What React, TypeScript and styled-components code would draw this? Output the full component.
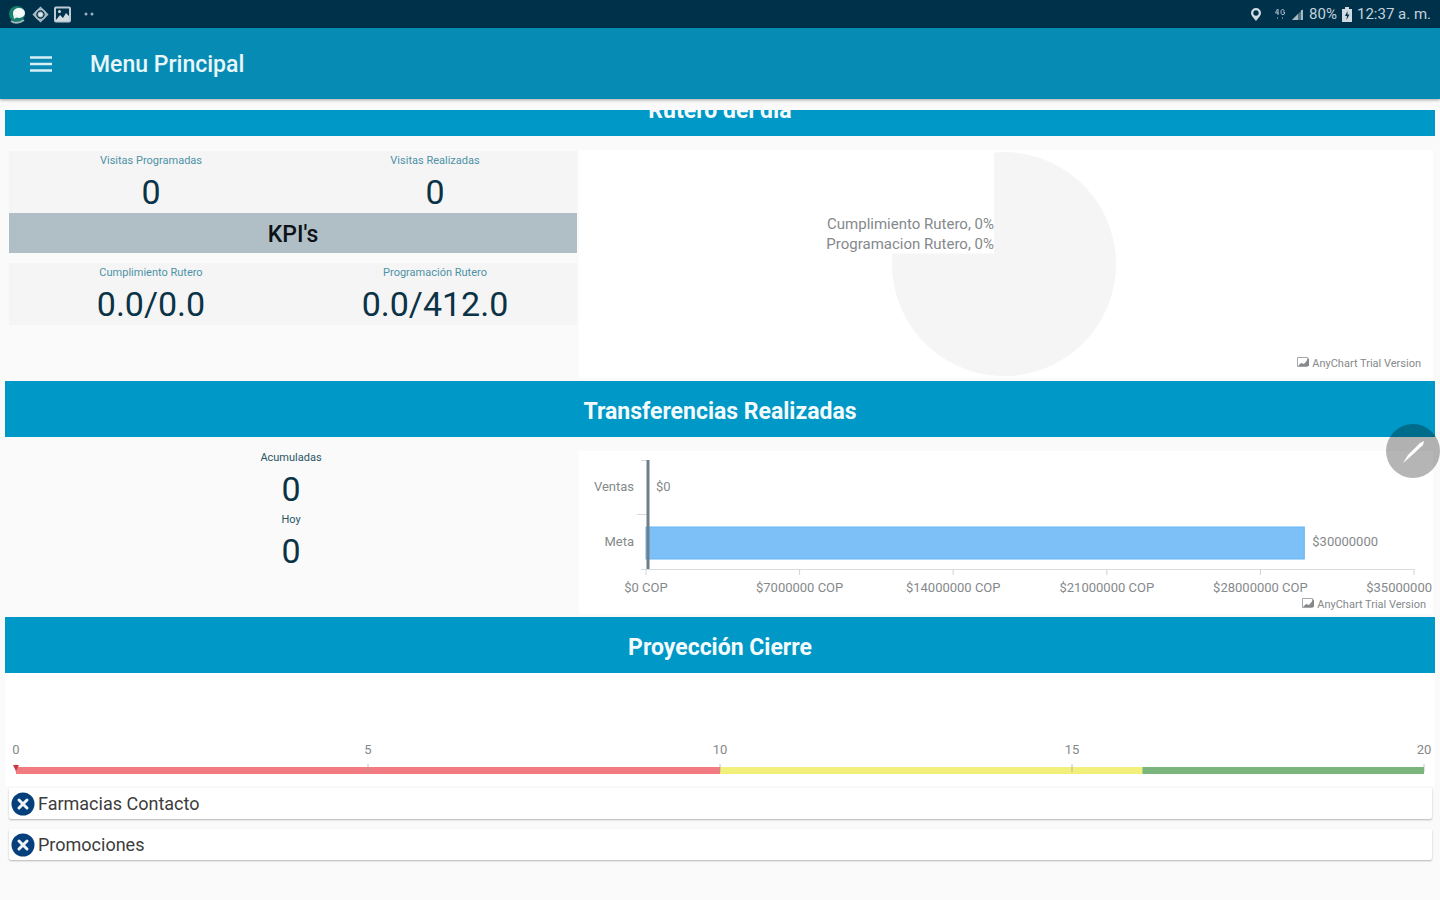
import React from "react";
import styled, { createGlobalStyle } from "styled-components";

const GlobalStyle = createGlobalStyle`
  * { box-sizing: border-box; }
  body {
    margin: 0;
    background: #fafafa;
    font-family: Roboto, "Liberation Sans", sans-serif;
    color: #0b3346;
  }
  h1, h2, h3, p, dl, dd, dt, ul { margin: 0; padding: 0; }
  button { font: inherit; color: inherit; border: 0; padding: 0; background: none; cursor: pointer; }
`;

const Page = styled.div`
  min-height: 100vh;
  overflow-x: hidden;
`;

const StatusBar = styled.div`
  display: flex;
  align-items: center;
  justify-content: space-between;
  height: 28px;
  padding: 0 9px 0 8px;
  background: #00314b;
  color: #c3d2da;
  font-size: 15px;
`;

const StatusGroup = styled.div`
  display: flex;
  align-items: center;
  gap: 5px;
`;

const Spacer = styled.span`
  width: 2px;
`;

const AppBar = styled.header`
  position: relative;
  display: flex;
  align-items: center;
  gap: 38px;
  height: 71px;
  padding: 0 30px;
  background: #068cb4;
  color: #e9f6fa;
  box-shadow: 0 1px 3px rgba(0, 0, 0, 0.35);
`;

const MenuButton = styled.button`
  display: flex;
`;

const AppTitle = styled.h1`
  font-size: 23px;
  font-weight: 500;
  line-height: 34px;
  padding-top: 2px;
`;

const Content = styled.main`
  padding: 11px 5px 40px;
`;

const ScrolledEdge = styled.div`
  display: flex;
  flex-direction: column;
  justify-content: flex-end;
  height: 26px;
  overflow: hidden;
`;

const SectionTitle = styled.h2`
  flex: none;
  height: 56px;
  background: #0098c6;
  color: #f4fbfd;
  font-size: 23px;
  font-weight: 700;
  line-height: 61px;
  text-align: center;
`;

const Split = styled.div<{ $height: number }>`
  display: grid;
  grid-template-columns: 2fr 3fr;
  min-height: ${(p) => p.$height}px;
`;

const StatsColumn = styled.div<{ $top: number; $left: number }>`
  padding: ${(p) => p.$top}px 0 0 ${(p) => p.$left}px;
`;

const StatPair = styled.dl`
  display: grid;
  grid-template-columns: 1fr 1fr;
  background: #f5f5f5;
`;

const StatStack = styled.dl`
  display: grid;
`;

const Stat = styled.div`
  text-align: center;
`;

const StatLabel = styled.dt<{ $dark?: boolean }>`
  font-size: 11px;
  line-height: 20px;
  color: ${(p) => (p.$dark ? "#2b5565" : "#4d92a6")};
`;

const StatValue = styled.dd`
  font-size: 34px;
  line-height: 42px;
`;

const KpiTitle = styled.h3`
  height: 40px;
  margin-bottom: 10px;
  background: #b0bec5;
  color: #0c1216;
  font-size: 23px;
  font-weight: 500;
  line-height: 44px;
  text-align: center;
`;

const ChartPanel = styled.div`
  margin: 14px 2px 3px;
  background: #fff;
  overflow: hidden;
`;

const ChartSvg = styled.svg`
  display: block;
  width: 100%;
  overflow: hidden;
`;

const ChartText = styled.text<{ $size: number }>`
  font-size: ${(p) => p.$size}px;
  fill: #85898b;
`;

const PlotArea = styled.div`
  padding: 0 19px 0 67px;
`;

const PlotSvg = styled.svg`
  display: block;
  width: 100%;
  overflow: visible;
`;

const GaugePanel = styled.div`
  padding: 66px 11px 9px;
  background: #fff;
`;

const LinkList = styled.ul`
  display: grid;
  gap: 10px;
  padding: 2px 3px 0 4px;
  list-style: none;
`;

const LinkCard = styled.button`
  display: flex;
  align-items: center;
  gap: 3px;
  width: 100%;
  height: 31px;
  padding-left: 2px;
  border-radius: 2px;
  background: #fff;
  color: #3c3c3c;
  font-size: 18px;
  text-align: left;
  box-shadow: 0 1px 2px rgba(0, 0, 0, 0.28);
`;

const PenButton = styled.button`
  position: fixed;
  top: 424px;
  right: 0;
  width: 54px;
  height: 54px;
  border-radius: 50%;
  background: rgba(0, 0, 0, 0.29);
`;

const ChatIcon = () => (
  <svg width="19" height="19" viewBox="0 0 19 19">
    <circle cx="9" cy="9" r="8" fill="#16816f" />
    <path d="M3 16q6 4 13-1" stroke="#9fb9bb" strokeWidth="2" fill="none" />
    <ellipse cx="11" cy="8" rx="6" ry="5" fill="#f6fbfa" />
    <path d="M5 9l1 5 5-3z" fill="#e8f4f1" />
  </svg>
);

const TargetIcon = () => (
  <svg width="17" height="17" viewBox="0 0 17 17" fill="none" stroke="#aebfc8">
    <path d="M8.500 1.500l7 7-7 7-7-7z" strokeWidth="1.500" />
    <circle cx="8.500" cy="8.500" r="5" strokeWidth="1.500" />
    <circle cx="8.500" cy="8.500" r="2.500" fill="#dbe6ea" />
  </svg>
);

const PictureIcon = () => (
  <svg width="17" height="17" viewBox="0 0 17 17">
    <rect x="1" y="1.500" width="15" height="14" rx="1" fill="none" stroke="#bccbd3" strokeWidth="2" />
    <path d="M2 14l4-5 3 3 3-5 3 3v5H2z" fill="#cfdbe1" />
    <circle cx="5.500" cy="5.500" r="1.500" fill="#cfdbe1" />
  </svg>
);

const DotsIcon = () => (
  <svg width="14" height="6" viewBox="0 0 14 6" fill="#9db2bd">
    <circle cx="3" cy="3" r="1.500" />
    <circle cx="9" cy="3" r="1.500" />
  </svg>
);

const PinIcon = () => (
  <svg width="12" height="15" viewBox="0 0 12 15">
    <path d="M6 1a5 5 0 0 1 5 5c0 3-3 5-5 8-2-3-5-5-5-8a5 5 0 0 1 5-5z" fill="#d0dce2" />
    <circle cx="6" cy="6" r="2.700" fill="#00314b" />
  </svg>
);

const NetworkIcon = () => (
  <svg width="12" height="15" viewBox="0 0 12 15" fill="none" stroke="#a9bcc6">
    <path d="M3.500 2L1.500 6h3.500M4 2v6M10.500 3.500Q7 1 7 5t3.500 2V5H9" />
    <path d="M3.500 10v2M8.500 10v2" opacity=".5" />
  </svg>
);

const SignalIcon = () => (
  <svg width="13" height="13" viewBox="0 0 13 13">
    <path d="M12 1v11H1z" fill="#4f7283" />
    <path d="M7 6v6H1z" fill="#a9bcc6" />
    <path d="M11 2v10" stroke="#c3d2da" strokeWidth="1.500" />
  </svg>
);

const BatteryIcon = () => (
  <svg width="10" height="15" viewBox="0 0 10 15">
    <path d="M3 0h4v2h3v13H0V2h3z" fill="#cfdbe1" />
    <path d="M5.500 4L3 9h2l-.5 4L7.500 7.500h-2z" fill="#00314b" />
  </svg>
);

const CloseBadge = () => (
  <svg width="24" height="24" viewBox="0 0 24 24">
    <circle cx="12" cy="12" r="11.500" fill="#05407c" />
    <path d="M8 8l8 8M16 8l-8 8" stroke="#eef4fa" strokeWidth="3" strokeLinecap="round" />
  </svg>
);

const Credit = ({ y, inset }: { y: number; inset: number }) => (
  <svg x="100%" y={y} overflow="visible">
    <g transform={`translate(${-inset} 0)`}>
      <path d="M-123.500-9.500h10v9h-10z" fill="none" stroke="#a5a8aa" />
      <path d="M-123-1l3-3 3 1 5-6v8z" fill="#85898b" />
      <ChartText $size={11} textAnchor="end">
        AnyChart Trial Version
      </ChartText>
    </g>
  </svg>
);

const PieChart = () => (
  <ChartSvg height="227" role="img" aria-label="Rutero">
    <svg x="50%" overflow="visible">
      <path d="M-12 2.500A112 112 0 1 1 -113.500 103.500H-12z" fill="#f5f5f5" />
      <ChartText $size={15} x="-12" y="79" textAnchor="end">
        Cumplimiento Rutero, 0%
      </ChartText>
      <ChartText $size={15} x="-12" y="99" textAnchor="end">
        Programacion Rutero, 0%
      </ChartText>
    </svg>
    <Credit y={217} inset={12} />
  </ChartSvg>
);

const MAX = 35000000;
const GOAL = 30000000;
const TICKS = [0, 7000000, 14000000, 21000000, 28000000];
const share = (value: number) => `${(value / MAX) * 100}%`;

const BarChart = () => (
  <PlotArea>
    <PlotSvg height="163" role="img" aria-label="Ventas y meta">
      <rect x="0" y="76" width={share(GOAL)} height="32" fill="#7cc0f7" stroke="#64b5f6" />
      <path d="M-5 9.500H2M-9 63.500H2M-5 118.500H2" stroke="#d5dadd" />
      <line x1="0" x2="100%" y1="118.500" y2="118.500" stroke="#d9dcde" />
      <line x1="2" x2="2" y1="9" y2="118" stroke="#6d7f89" strokeWidth="3" />
      <ChartText $size={13} x="-12" y="40" textAnchor="end">Ventas</ChartText>
      <ChartText $size={13} x="-12" y="95" textAnchor="end">Meta</ChartText>
      <ChartText $size={13} x="10" y="40">$0</ChartText>
      <svg x={share(GOAL)} overflow="visible">
        <ChartText $size={13} x="8" y="95">$30000000</ChartText>
      </svg>
      {TICKS.map((t) => (
        <svg key={t} x={share(t)} overflow="visible">
          <path d="M0 118v6" stroke="#cfd3d5" />
          <ChartText $size={13} y="141" textAnchor="middle">{`$${t} COP`}</ChartText>
        </svg>
      ))}
      <svg x="100%" overflow="visible">
        <path d="M0 118v6" stroke="#cfd3d5" />
        <ChartText $size={13} x="18" y="141" textAnchor="end">{`$${MAX}`}</ChartText>
      </svg>
      <Credit y={157} inset={-12} />
    </PlotSvg>
  </PlotArea>
);

const RANGES = [
  { from: 0, to: 10, color: "#f17b80" },
  { from: 10, to: 16, color: "#f2f07a" },
  { from: 16, to: 20, color: "#7ab67c" },
];

const LinearGauge = () => (
  <PlotSvg height="38" role="img" aria-label="Proyección Cierre">
    {RANGES.map((r) => (
      <rect key={r.from} x={`${r.from * 5}%`} y="28" width={`${(r.to - r.from) * 5}%`} height="7" fill={r.color} />
    ))}
    {[0, 5, 10, 15, 20].map((v) => (
      <svg key={v} x={`${v * 5}%`} overflow="visible">
        <path d="M0 25v8" stroke="#8aa0a8" opacity=".6" />
        <ChartText $size={13} y="15" textAnchor="middle">{v}</ChartText>
      </svg>
    ))}
    <path d="M-3 26h6l-3 6z" fill="#c9363c" />
  </PlotSvg>
);

const StatItem = ({ label, value, dark }: { label: string; value: string; dark?: boolean }) => (
  <Stat>
    <StatLabel $dark={dark}>{label}</StatLabel>
    <StatValue>{value}</StatValue>
  </Stat>
);

export default function App() {
  return (
    <Page>
      <GlobalStyle />
      <StatusBar>
        <StatusGroup>
          <ChatIcon />
          <TargetIcon />
          <PictureIcon />
          <Spacer />
          <DotsIcon />
        </StatusGroup>
        <StatusGroup>
          <PinIcon />
          <Spacer />
          <NetworkIcon />
          <SignalIcon />
          <span>80%</span>
          <BatteryIcon />
          <span>12:37 a. m.</span>
        </StatusGroup>
      </StatusBar>
      <AppBar>
        <MenuButton aria-label="Menu">
          <svg width="22" height="18" viewBox="0 0 22 18" stroke="#d8eef5" strokeWidth="2.500">
            <path d="M0 2.500h22M0 9h22M0 15.500h22" />
          </svg>
        </MenuButton>
        <AppTitle>Menu Principal</AppTitle>
      </AppBar>
      <Content>
        <section>
          <ScrolledEdge>
            <SectionTitle>Rutero del día</SectionTitle>
          </ScrolledEdge>
          <Split $height={245}>
            <StatsColumn $top={15} $left={4}>
              <StatPair>
                <StatItem label="Visitas Programadas" value="0" />
                <StatItem label="Visitas Realizadas" value="0" />
              </StatPair>
              <KpiTitle>KPI's</KpiTitle>
              <StatPair>
                <StatItem label="Cumplimiento Rutero" value="0.0/0.0" />
                <StatItem label="Programación Rutero" value="0.0/412.0" />
              </StatPair>
            </StatsColumn>
            <ChartPanel>
              <PieChart />
            </ChartPanel>
          </Split>
        </section>
        <section>
          <SectionTitle>Transferencias Realizadas</SectionTitle>
          <Split $height={180}>
            <StatsColumn $top={11} $left={0}>
              <StatStack>
                <StatItem label="Acumuladas" value="0" dark />
                <StatItem label="Hoy" value="0" dark />
              </StatStack>
            </StatsColumn>
            <ChartPanel>
              <BarChart />
            </ChartPanel>
          </Split>
        </section>
        <section>
          <SectionTitle>Proyección Cierre</SectionTitle>
          <GaugePanel>
            <LinearGauge />
          </GaugePanel>
        </section>
        <LinkList>
          {["Farmacias Contacto", "Promociones"].map((name) => (
            <li key={name}>
              <LinkCard>
                <CloseBadge />
                {name}
              </LinkCard>
            </li>
          ))}
        </LinkList>
      </Content>
      <PenButton aria-label="Editar">
        <svg width="54" height="54" viewBox="0 0 54 54">
          <path d="M34 19l4-2-1 4-13 12-7 6 5-8z" fill="#fff" />
        </svg>
      </PenButton>
    </Page>
  );
}
